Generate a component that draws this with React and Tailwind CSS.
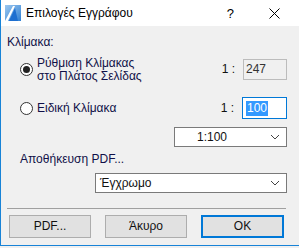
function Radio({ checked }) {
  return (
    <span className="w-[13px] h-[13px] rounded-full border border-[#333] bg-white flex items-center justify-center shrink-0">
      {checked && <span className="w-[7px] h-[7px] rounded-full bg-[#222]" />}
    </span>
  )
}

function Chevron() {
  return (
    <svg width="10" height="6" viewBox="0 0 10 6" className="shrink-0">
      <path d="M1 1 L5 5 L9 1" fill="none" stroke="#444" strokeWidth="1" />
    </svg>
  )
}

function Select({ value, className, textClass }) {
  return (
    <div className={`h-[20px] border border-[#7a7a7a] bg-white flex items-center pr-[6px] ${className}`}>
      <span className={`flex-1 ${textClass}`}>{value}</span>
      <Chevron />
    </div>
  )
}

function AppIcon() {
  return (
    <svg width="16" height="16" viewBox="0 0 16 16">
      <defs>
        <linearGradient id="ig" x1="0" y1="0" x2="1" y2="1">
          <stop offset="0" stopColor="#9cc8f0" />
          <stop offset="1" stopColor="#2f7fd3" />
        </linearGradient>
      </defs>
      <rect x="0" y="0" width="16" height="16" fill="url(#ig)" />
      <path d="M0 16 L8 1 L10 1 L3 16 Z" fill="#ffffff" />
      <path d="M4 16 L10 3 L13 16 Z" fill="#1e6fd0" />
    </svg>
  )
}

export default function App() {
  return (
    <div className="w-[299px] h-[248px] bg-[#f0f0f0] overflow-hidden text-[12px] leading-[15px] text-[#111]" style={{ fontFamily: '"Liberation Sans", "Noto Sans", sans-serif' }}>
      <div className="h-[246px] border-l border-b border-[#1883d7] flex flex-col">
        {/* title bar */}
        <div className="h-[26px] bg-white flex items-center shrink-0">
          <div className="ml-[4px] mr-[5px]"><AppIcon /></div>
          <span className="text-[12px] text-black">Επιλογές Εγγράφου</span>
          <span className="ml-auto text-[13px] text-black mr-[35px]">?</span>
          <svg width="11" height="11" viewBox="0 0 11 11" className="mr-[19px]">
            <path d="M0.5 0.5 L10.5 10.5 M10.5 0.5 L0.5 10.5" stroke="#000" strokeWidth="1" />
          </svg>
        </div>

        {/* body */}
        <div className="flex-1 flex flex-col pl-[6px] pr-[12px]">
          <div className="mt-[9px] text-[#101048]">Κλίμακα:</div>

          <div className="mt-[9px] h-[21px] flex items-center">
            <div className="ml-[13px]"><Radio checked /></div>
            <div className="ml-[4px] leading-[13px] text-[#101048]">
              <div>Ρύθμιση Κλίμακας</div>
              <div>στο Πλάτος Σελίδας</div>
            </div>
            <span className="ml-auto mr-[8px]">1 :</span>
            <div className="w-[44px] h-[21px] border border-[#bcbcbc] bg-[#f0f0f0] flex items-center pl-[2px] text-[#333]">247</div>
          </div>

          <div className="mt-[17px] h-[22px] flex items-center">
            <div className="ml-[13px]"><Radio /></div>
            <span className="ml-[4px] text-[#101048]">Ειδική Κλίμακα</span>
            <span className="ml-auto mr-[8px]">1 :</span>
            <div className="w-[45px] h-[22px] border border-[#0078d7] bg-white flex items-center pl-[3px]">
              <span className="bg-[#3399ff] text-white px-[1px]">100</span>
            </div>
          </div>

          <div className="mt-[8px] flex justify-end">
            <Select value="1:100" className="w-[113px]" textClass="pl-[22px]" />
          </div>

          <div className="mt-[5px] ml-[13px] text-[#101048]">Αποθήκευση PDF...</div>

          <div className="mt-[6px] flex justify-end">
            <Select value="Έγχρωμο" className="w-[192px]" textClass="pl-[4px]" />
          </div>

          <div className="mt-[15px] ml-[0px] mr-[1px] h-[1px] bg-[#a0a0a0]" />

          <div className="mt-[6px] flex pl-[2px] gap-[14px]">
            <button className="w-[82px] h-[23px] bg-[#e1e1e1] border border-[#adadad] text-[#111]">PDF...</button>
            <button className="w-[82px] h-[23px] bg-[#e1e1e1] border border-[#adadad] text-[#111]">Άκυρο</button>
            <button className="w-[83px] h-[23px] bg-[#e1e1e1] border-2 border-[#0078d7] text-[#111]">OK</button>
          </div>
        </div>
      </div>
    </div>
  )
}
